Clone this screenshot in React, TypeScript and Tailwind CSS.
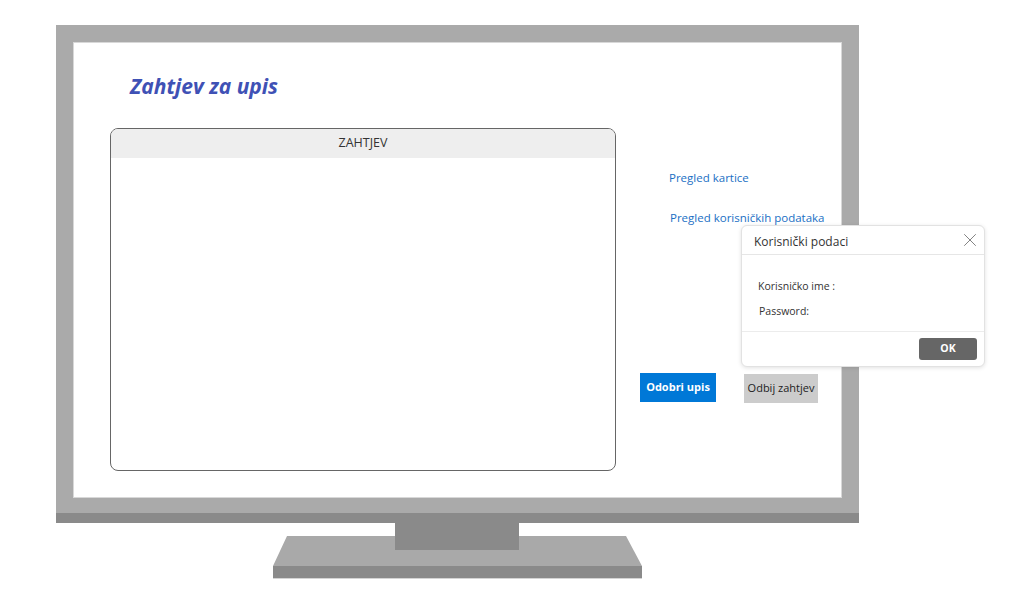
import { X } from 'lucide-react';

const font = { fontFamily: '"Open Sans", "Noto Sans", sans-serif' };

function Stand() {
  // stand drawing under the monitor, coordinates relative to the monitor left edge
  return (
    <svg width="803" height="56" viewBox="0 0 803 56" className="block">
      <polygon points="231,13 570,13 586,43 217,43" fill="#a9a9a9" />
      <rect x="217" y="43" width="369" height="12" fill="#8a8a8a" />
      <rect x="217" y="55" width="369" height="1" fill="#d4d4d4" />
      <rect x="339" y="0" width="124" height="27" fill="#8a8a8a" />
    </svg>
  );
}

function UserDialog() {
  return (
    <div className="absolute left-[741px] top-[225px] w-[244px] h-[142px] bg-white rounded-[6px] border border-[#e2e2e2] shadow-[0_1px_4px_rgba(0,0,0,0.12)] flex flex-col text-[#333]">
      <div className="h-[29px] flex items-center justify-between pl-[12px] pr-[3px] pt-[3px] border-b border-[#e6e6e6]">
        <span className="text-[12px]">Korisnički podaci</span>
        <X size={22} strokeWidth={0.8} className="text-[#555] -mt-[3px]" />
      </div>
      <div className="flex-1 flex flex-col pl-[16px] pt-[23px] gap-[9px] text-[10.5px] border-b border-[#ececec]">
        <span className="leading-4">Korisničko ime :</span>
        <span className="leading-4 pl-[1px]">Password:</span>
      </div>
      <div className="h-[34px] flex items-center justify-end pr-[7px]">
        <button className="w-[58px] h-[22px] rounded-[3px] bg-[#666666] text-white text-[10.5px] font-bold">OK</button>
      </div>
    </div>
  );
}

export default function App() {
  return (
    <div className="relative w-[1030px] h-[603px] bg-white overflow-hidden" style={font}>
      <div className="pl-[56px] pt-[25px]">
        <div className="w-[803px]">
          <div className="border-[17px] border-b-0 border-[#aaaaaa]">
            <div className="h-[456px] bg-white border border-[#d8d8d8] pl-[36px]">
              <div className="h-[85px] pt-[28px] pl-[20px]">
                <h1 className="text-[21px] leading-[30px] font-bold italic text-[#3f51b5]">Zahtjev za upis</h1>
              </div>
              <div className="flex">
                <div className="w-[506px] h-[343px] border border-[#666] rounded-[8px] overflow-hidden">
                  <div className="h-[29px] bg-[#eeeeee] flex items-center justify-center text-[12.5px] text-[#333]">
                    ZAHTJEV
                  </div>
                </div>
                <div className="flex flex-col pl-[24px] text-[11.5px]">
                  <a className="mt-[42px] h-4 leading-4 pl-[29px] text-[#1a6fc4]">Pregled kartice</a>
                  <a className="mt-[24px] h-4 leading-4 pl-[30px] text-[#1a6fc4]">Pregled korisničkih podataka</a>
                  <div className="mt-[147px] flex items-start gap-[28px]">
                    <button className="w-[76px] h-[29px] bg-[#0078d7] text-white text-[11px] font-bold">Odobri upis</button>
                    <button className="mt-[1px] w-[74px] h-[29px] bg-[#cccccc] text-[#222] text-[11px]">Odbij zahtjev</button>
                  </div>
                </div>
              </div>
            </div>
          </div>
          <div className="h-[15px] bg-[#aaaaaa]" />
          <div className="h-[10px] bg-[#8a8a8a]" />
          <Stand />
        </div>
      </div>
      <UserDialog />
    </div>
  );
}
